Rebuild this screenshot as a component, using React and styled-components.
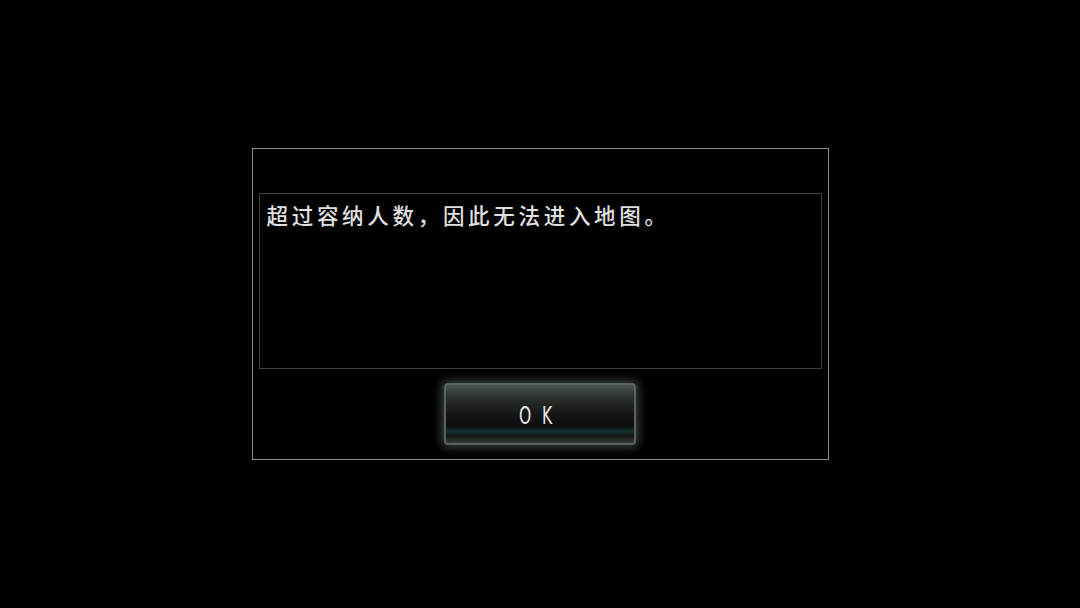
import React from 'react';
import styled, { createGlobalStyle } from 'styled-components';

const Global = createGlobalStyle`
  html, body {
    margin: 0;
    padding: 0;
    background: #000;
  }
  body {
    width: 1080px;
    height: 608px;
    overflow: hidden;
    font-family: "Noto Sans CJK SC", "Noto Sans", sans-serif;
  }
`;

const Screen = styled.div`
  width: 1080px;
  height: 608px;
  background: #000;
  display: flex;
  align-items: flex-start;
  justify-content: center;
  padding-top: 148px;
  box-sizing: border-box;
`;

const Dialog = styled.div`
  width: 577px;
  height: 312px;
  box-sizing: border-box;
  border: 1px solid #8a8a8a;
  padding: 44px 6px 0 6px;
  display: flex;
  flex-direction: column;
  align-items: center;
`;

const MessageBox = styled.div`
  width: 100%;
  height: 176px;
  box-sizing: border-box;
  border: 1px solid #3e3e3e;
  padding: 5px 7px;
  color: #e0e0e0;
  font-size: 21.5px;
  font-weight: 500;
  line-height: 32px;
  letter-spacing: 3.7px;
`;

const Button = styled.button`
  margin-top: 14px;
  width: 192px;
  height: 62px;
  box-sizing: border-box;
  border: 2px solid #5a625c;
  border-radius: 4px;
  background: linear-gradient(
    to bottom,
    #4a534d 0%,
    #2a302c 22%,
    #141614 50%,
    #0c0d0c 70%,
    #15302f 80%,
    #121615 87%,
    #353b37 100%
  );
  box-shadow: 0 0 8px 3px rgba(120, 130, 122, 0.45);
  padding: 4px 0 0 0;
  cursor: pointer;
`;

const Label = styled.span`
  display: inline-block;
  color: #e8e8e8;
  font-family: "DejaVu Sans Condensed", "DejaVu Sans", sans-serif;
  font-size: 24px;
  letter-spacing: 15px;
  padding-left: 4px;
  transform: scaleX(0.72);
`;

export default function App() {
  return (
    <>
      <Global />
      <Screen>
        <Dialog>
          <MessageBox>超过容纳人数，因此无法进入地图。</MessageBox>
          <Button>
            <Label>OK</Label>
          </Button>
        </Dialog>
      </Screen>
    </>
  );
}
